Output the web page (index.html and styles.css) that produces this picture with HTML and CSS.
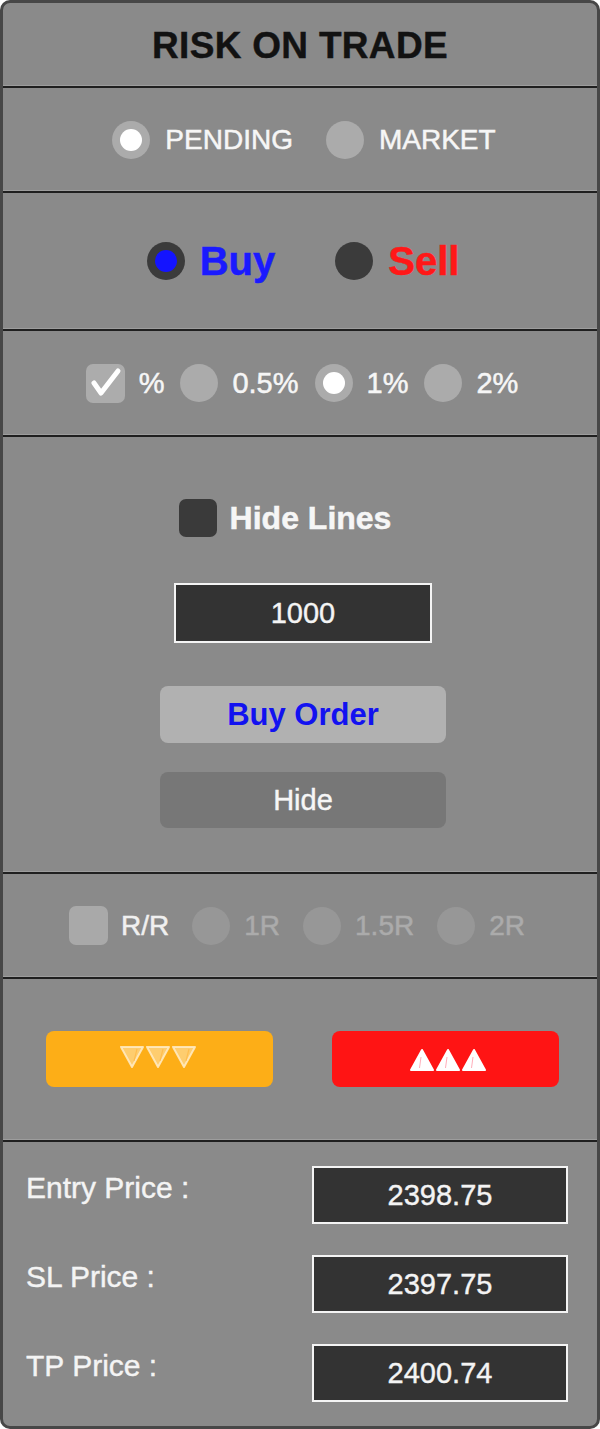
FILE: index.html
```html
<!DOCTYPE html>
<html lang="en">
<head>
<meta charset="utf-8">
<title>Risk On Trade</title>
<link rel="stylesheet" href="styles.css">
</head>
<body>
<div class="panel">
  <section class="sec sec-title">
    <h1 class="title">RISK ON TRADE</h1>
  </section>

  <section class="sec sec-mode">
    <div class="opt">
      <span class="radio radio-light"><span class="dot dot-white"></span></span>
      <span class="lbl">PENDING</span>
    </div>
    <div class="opt">
      <span class="radio radio-light"></span>
      <span class="lbl">MARKET</span>
    </div>
  </section>

  <section class="sec sec-side">
    <div class="opt">
      <span class="radio radio-dark"><span class="dot dot-blue"></span></span>
      <span class="lbl side side-buy">Buy</span>
    </div>
    <div class="opt">
      <span class="radio radio-dark"></span>
      <span class="lbl side side-sell">Sell</span>
    </div>
  </section>

  <section class="sec sec-risk">
    <div class="opt">
      <span class="check check-light">
        <svg viewBox="0 0 39 39" width="39" height="39"><path d="M8 19 L15 29 L32 7" fill="none" stroke="#ffffff" stroke-width="5" stroke-linecap="round" stroke-linejoin="round"/></svg>
      </span>
      <span class="lbl pct">%</span>
    </div>
    <div class="opt">
      <span class="radio radio-light"></span>
      <span class="lbl pct">0.5%</span>
    </div>
    <div class="opt">
      <span class="radio radio-light"><span class="dot dot-white"></span></span>
      <span class="lbl pct">1%</span>
    </div>
    <div class="opt">
      <span class="radio radio-light"></span>
      <span class="lbl pct">2%</span>
    </div>
  </section>

  <section class="sec sec-main">
    <div class="opt hide-row">
      <span class="check check-dark"></span>
      <span class="lbl hide-lbl">Hide Lines</span>
    </div>
    <div class="field field-amount">1000</div>
    <button class="btn btn-order">Buy Order</button>
    <button class="btn btn-hide">Hide</button>
  </section>

  <section class="sec sec-rr">
    <div class="opt">
      <span class="check check-rr"></span>
      <span class="lbl rr-lbl">R/R</span>
    </div>
    <div class="opt">
      <span class="radio radio-dim"></span>
      <span class="lbl dim-lbl">1R</span>
    </div>
    <div class="opt">
      <span class="radio radio-dim"></span>
      <span class="lbl dim-lbl">1.5R</span>
    </div>
    <div class="opt">
      <span class="radio radio-dim"></span>
      <span class="lbl dim-lbl">2R</span>
    </div>
  </section>

  <section class="sec sec-arrows">
    <button class="arrow-btn arrow-down">
      <svg viewBox="0 0 78 24" width="78" height="24">
        <g fill="rgba(255,255,255,0.38)" stroke="rgba(255,236,200,0.85)" stroke-width="2" stroke-linejoin="round">
          <polygon points="2,2 24,2 13,22"/>
          <polygon points="28,2 50,2 39,22"/>
          <polygon points="54,2 76,2 65,22"/>
        </g>
        <g stroke="rgba(255,185,70,0.8)" stroke-width="1.2">
          <line x1="18" y1="4" x2="15" y2="16"/>
          <line x1="44" y1="4" x2="41" y2="16"/>
          <line x1="70" y1="4" x2="67" y2="16"/>
        </g>
      </svg>
    </button>
    <button class="arrow-btn arrow-up">
      <svg viewBox="0 0 78 24" width="78" height="24">
        <g fill="#ffffff" stroke="#ffffff" stroke-width="2" stroke-linejoin="round">
          <polygon points="13,2 24,22 2,22"/>
          <polygon points="39,2 50,22 28,22"/>
          <polygon points="65,2 76,22 54,22"/>
        </g>
        <g stroke="rgba(255,120,140,0.6)" stroke-width="1">
          <line x1="12" y1="9" x2="10.5" y2="20"/>
          <line x1="38" y1="9" x2="36.5" y2="20"/>
          <line x1="64" y1="9" x2="62.5" y2="20"/>
        </g>
      </svg>
    </button>
  </section>

  <section class="sec sec-prices">
    <div class="price-row">
      <span class="price-lbl">Entry Price :</span>
      <div class="field field-price">2398.75</div>
    </div>
    <div class="price-row">
      <span class="price-lbl">SL Price :</span>
      <div class="field field-price">2397.75</div>
    </div>
    <div class="price-row">
      <span class="price-lbl">TP Price :</span>
      <div class="field field-price">2400.74</div>
    </div>
  </section>
</div>
</body>
</html>
```

FILE: styles.css
```css
* {
  box-sizing: border-box;
}

html, body {
  margin: 0;
  padding: 0;
  background: #ffffff;
}

body {
  font-family: "Liberation Sans", Arial, sans-serif;
}

.panel {
  width: 600px;
  height: 1429px;
  background: #8a8a8a;
  border: 3px solid #474747;
  border-radius: 10px;
  display: flex;
  flex-direction: column;
  overflow: hidden;
}

.sec {
  flex: none;
  border-bottom: 2px solid #1f1f1f;
  box-shadow: inset 0 -1px 0 #9d9d9d;
  display: flex;
  align-items: center;
  justify-content: center;
}

.sec-title { height: 85px; }
.sec-mode { height: 105px; padding-left: 8px; gap: 33px; }
.sec-side { height: 138px; padding-left: 6px; gap: 60px; }
.sec-risk { height: 106px; padding-left: 4px; gap: 16px; }
.sec-main {
  height: 437px;
  flex-direction: column;
  justify-content: flex-start;
  padding-top: 62px;
}
.sec-rr { height: 105px; gap: 23px; padding-right: 6px; }
.sec-arrows {
  height: 163px;
  justify-content: space-between;
  padding: 0 38px 2px 43px;
}
.sec-prices {
  flex: 1;
  border-bottom: none;
  box-shadow: none;
  flex-direction: column;
  align-items: stretch;
  justify-content: flex-start;
  padding: 24px 29px 0 23px;
  gap: 31px;
}

.title {
  margin: 0;
  font-size: 37px;
  font-weight: 700;
  color: #121212;
  line-height: 1;
  padding-top: 2px;
  letter-spacing: 0.3px;
  -webkit-text-stroke: 0.4px #121212;
}

.opt {
  display: flex;
  align-items: center;
  gap: 15px;
}

.lbl {
  color: #f6f6f6;
  font-size: 28px;
  line-height: 1;
  white-space: nowrap;
  -webkit-text-stroke: 0.5px currentColor;
}

.radio {
  width: 38px;
  height: 38px;
  border-radius: 50%;
  display: flex;
  align-items: center;
  justify-content: center;
  flex: none;
}

.radio-light { background: #ababab; }
.radio-dark { background: #3b3b3b; }
.radio-dim { background: #979797; }

.dot {
  width: 22px;
  height: 22px;
  border-radius: 50%;
}

.dot-white { background: #ffffff; }
.dot-blue { background: #1414ff; }

.side {
  font-size: 40px;
  font-weight: 700;
}

.side-buy { color: #1a1aff; }
.side-sell { color: #ff1818; }

.check {
  width: 39px;
  height: 39px;
  border-radius: 7px;
  flex: none;
  display: flex;
}

.check-light { background: #acacac; }
.check-dark { background: #3a3a3a; width: 38px; height: 38px; }
.check-rr { background: #a9a9a9; }

.sec-risk .opt { gap: 14px; }

.pct { font-size: 29px; }

.hide-row {
  gap: 13px;
  margin-right: 30px;
}

.hide-lbl {
  font-size: 32px;
  font-weight: 700;
}

.field {
  background: #333333;
  border: 2px solid #f4f4f4;
  color: #f4f4f4;
  display: flex;
  align-items: center;
  justify-content: center;
  font-size: 29px;
  line-height: 1;
  -webkit-text-stroke: 0.4px #f4f4f4;
}

.field-amount {
  width: 258px;
  height: 60px;
  margin-top: 46px;
  margin-left: 6px;
}

.btn {
  width: 286px;
  border: none;
  border-radius: 8px;
  font-family: "Liberation Sans", Arial, sans-serif;
  line-height: 1;
  padding: 0;
  margin-left: 6px;
}

.btn-order {
  height: 57px;
  margin-top: 43px;
  background: #b1b1b1;
  color: #1212f0;
  font-size: 31px;
  font-weight: 700;
}

.btn-hide {
  height: 56px;
  margin-top: 29px;
  background: #777777;
  color: #f6f6f6;
  font-size: 29px;
  -webkit-text-stroke: 0.4px #f6f6f6;
}

.sec-rr .opt { gap: 14px; }
.sec-rr .opt:first-child { gap: 13px; }

.rr-lbl { font-size: 28px; color: #f0f0f0; }
.dim-lbl { font-size: 28px; color: #ababab; }

.arrow-btn {
  width: 227px;
  height: 56px;
  border: none;
  border-radius: 8px;
  padding: 0;
  display: flex;
  align-items: center;
  justify-content: center;
}

.arrow-down { background: #fdae17; padding-right: 4px; padding-bottom: 4px; }
.arrow-up { background: #ff1414; padding-left: 4px; padding-top: 2px; }

.price-row {
  display: flex;
  align-items: center;
  justify-content: space-between;
}

.price-lbl {
  color: #f4f4f4;
  font-size: 30px;
  line-height: 1;
  margin-bottom: 14px;
  -webkit-text-stroke: 0.4px #f4f4f4;
}

.field-price {
  width: 256px;
  height: 58px;
}
```
